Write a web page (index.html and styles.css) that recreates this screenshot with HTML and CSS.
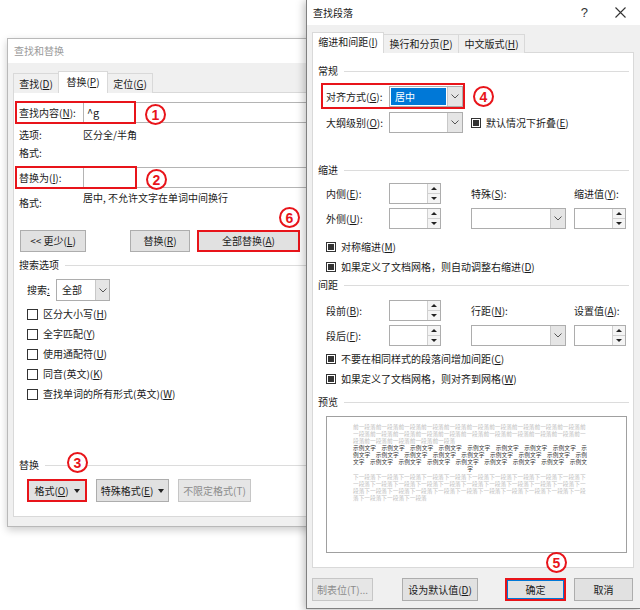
FILE: index.html
```html
<!DOCTYPE html>
<html lang="zh-CN">
<head>
    <meta charset="UTF-8">
    <meta name="viewport" content="width=device-width, initial-scale=1.0">
    <title>查找和替换</title>
    <link rel="stylesheet" href="styles.css">
</head>
<body>
<div class="desk">

    <!-- 查找和替换 -->
    <div class="dlg dlg-find">
        <div class="titlebar inactive"><span class="title">查找和替换</span></div>
        <div class="dlg-body">
            <div class="tabs">
                <div class="tab w45">查找(<u>D</u>)</div>
                <div class="tab active w50">替换(<u>P</u>)</div>
                <div class="tab w45">定位(<u>G</u>)</div>
            </div>
            <div class="panel find-panel">
                <div class="field-row first">
                    <span class="lbl">查找内容(<u>N</u>):</span>
                    <div class="textbox">^g</div>
                </div>
                <div class="info-row opt"><span class="lbl">选项:</span><span>区分全/半角</span></div>
                <div class="info-row"><span class="lbl">格式:</span></div>
                <div class="field-row second">
                    <span class="lbl">替换为(<u>I</u>):</span>
                    <div class="textbox"></div>
                </div>
                <div class="info-row fmt">
                    <span class="lbl">格式:</span>
                    <span class="fmt-val">居中, 不允许文字在单词中间换行</span>
                </div>
                <div class="btn-row act-row">
                    <div class="btn btn-less">&lt;&lt; 更少(<u>L</u>)</div>
                    <div class="btn btn-rep">替换(<u>R</u>)</div>
                    <div class="btn btn-all marked">全部替换(<u>A</u>)</div>
                </div>
                <div class="group-title">搜索选项</div>
                <div class="search-row">
                    <span class="search-lbl">搜索<u>:</u></span>
                    <div class="combo search-combo">
                        <span class="combo-val">全部</span>
                        <span class="combo-drop"><svg width="8" height="5" viewBox="0 0 8 5"><polyline points="0.5,0.5 4,4 7.5,0.5" fill="none" stroke="#555"/></svg></span>
                    </div>
                </div>
                <div class="checks">
                    <div class="chk"><i class="box"></i>区分大小写(<u>H</u>)</div>
                    <div class="chk"><i class="box"></i>全字匹配(<u>Y</u>)</div>
                    <div class="chk"><i class="box"></i>使用通配符(<u>U</u>)</div>
                    <div class="chk"><i class="box"></i>同音(英文)(<u>K</u>)</div>
                    <div class="chk"><i class="box"></i>查找单词的所有形式(英文)(<u>W</u>)</div>
                </div>
                <div class="group-title rep-title">替换</div>
                <div class="btn-row fmt-row">
                    <div class="btn btn-fmt marked">格式(<u>O</u>)<i class="caret"></i></div>
                    <div class="btn btn-special">特殊格式(<u>E</u>)<i class="caret"></i></div>
                    <div class="btn btn-nofmt disabled">不限定格式(T)</div>
                </div>
            </div>
        </div>
    </div>

    <!-- 查找段落 -->
    <div class="dlg dlg-para">
        <div class="titlebar">
            <span class="title">查找段落</span>
            <span class="title-tools">
                <span class="help">?</span>
                <svg class="close" width="11" height="11" viewBox="0 0 11 11"><path d="M0.5 0.5 L10.5 10.5 M10.5 0.5 L0.5 10.5" stroke="#333" stroke-width="1.1"/></svg>
            </span>
        </div>
        <div class="dlg-body">
            <div class="tabs">
                <div class="tab active w71">缩进和间距(<u>I</u>)</div>
                <div class="tab w75">换行和分页(<u>P</u>)</div>
                <div class="tab w66">中文版式(<u>H</u>)</div>
            </div>
            <div class="panel para-panel">
                <div class="group-title">常规</div>
                <div class="p-row align-row">
                    <span class="p-lbl">对齐方式(<u>G</u>):</span>
                    <div class="combo p-combo">
                        <span class="combo-val selected">居中</span>
                        <span class="combo-drop"><svg width="8" height="5" viewBox="0 0 8 5"><polyline points="0.5,0.5 4,4 7.5,0.5" fill="none" stroke="#555"/></svg></span>
                    </div>
                </div>
                <div class="p-row outline-row">
                    <span class="p-lbl">大纲级别(<u>O</u>):</span>
                    <div class="combo p-combo">
                        <span class="combo-val"></span>
                        <span class="combo-drop"><svg width="8" height="5" viewBox="0 0 8 5"><polyline points="0.5,0.5 4,4 7.5,0.5" fill="none" stroke="#555"/></svg></span>
                    </div>
                    <div class="chk collapse-chk"><i class="box mixed"></i>默认情况下折叠(<u>E</u>)</div>
                </div>

                <div class="group-title sec-title">缩进</div>
                <div class="p-grid">
                    <span class="p-lbl">内侧(<u>E</u>):</span>
                    <div class="spin"><span class="spin-btns"><i class="up"></i><i class="down"></i></span></div>
                    <span class="p-lbl">特殊(<u>S</u>):</span>
                    <span class="p-lbl">缩进值(<u>Y</u>):</span>

                    <span class="p-lbl">外侧(<u>U</u>):</span>
                    <div class="spin"><span class="spin-btns"><i class="up"></i><i class="down"></i></span></div>
                    <div class="combo g-combo">
                        <span class="combo-val"></span>
                        <span class="combo-drop"><svg width="8" height="5" viewBox="0 0 8 5"><polyline points="0.5,0.5 4,4 7.5,0.5" fill="none" stroke="#555"/></svg></span>
                    </div>
                    <div class="spin"><span class="spin-btns"><i class="up"></i><i class="down"></i></span></div>
                </div>
                <div class="p-checks first-checks">
                    <div class="chk"><i class="box mixed"></i>对称缩进(<u>M</u>)</div>
                    <div class="chk"><i class="box mixed"></i>如果定义了文档网格，则自动调整右缩进(<u>D</u>)</div>
                </div>

                <div class="group-title">间距</div>
                <div class="p-grid spacing-grid">
                    <span class="p-lbl">段前(<u>B</u>):</span>
                    <div class="spin"><span class="spin-btns"><i class="up"></i><i class="down"></i></span></div>
                    <span class="p-lbl">行距(<u>N</u>):</span>
                    <span class="p-lbl">设置值(<u>A</u>):</span>

                    <span class="p-lbl">段后(<u>F</u>):</span>
                    <div class="spin"><span class="spin-btns"><i class="up"></i><i class="down"></i></span></div>
                    <div class="combo g-combo">
                        <span class="combo-val"></span>
                        <span class="combo-drop"><svg width="8" height="5" viewBox="0 0 8 5"><polyline points="0.5,0.5 4,4 7.5,0.5" fill="none" stroke="#555"/></svg></span>
                    </div>
                    <div class="spin"><span class="spin-btns"><i class="up"></i><i class="down"></i></span></div>
                </div>
                <div class="p-checks second-checks">
                    <div class="chk"><i class="box mixed"></i>不要在相同样式的段落间增加间距(<u>C</u>)</div>
                    <div class="chk"><i class="box mixed"></i>如果定义了文档网格，则对齐到网格(<u>W</u>)</div>
                </div>

                <div class="group-title preview-title">预览</div>
                <div class="preview">
                    <div class="pv-text">
                        <p class="pv-gray">前一段落前一段落前一段落前一段落前一段落前一段落前一段落前一段落前一段落前一段落前一段落前一段落前一段落前一段落前一段落前一段落前一段落前一段落前一段落前一段落前一段落前一段落前一段落前一段落前一段落</p>
                        <p class="pv-sample">示例文字 示例文字 示例文字 示例文字 示例文字 示例文字 示例文字 示例文字 示例文字 示例文字 示例文字 示例文字 示例文字 示例文字 示例文字 示例文字 示例文字 示例文字 示例文字 示例文字 示例文字 示例文字 示例文字 示例文字 示例文字</p>
                        <p class="pv-gray">下一段落下一段落下一段落下一段落下一段落下一段落下一段落下一段落下一段落下一段落下一段落下一段落下一段落下一段落下一段落下一段落下一段落下一段落下一段落下一段落下一段落下一段落下一段落下一段落下一段落下一段落下一段落下一段落下一段落下一段落下一段落下一段落下一段落下一段落</p>
                    </div>
                </div>
            </div>
            <div class="para-buttons">
                <div class="btn btn-tabs disabled">制表位(T)...</div>
                <div class="btn btn-default">设为默认值(<u>D</u>)</div>
                <div class="btn btn-ok marked">确定</div>
                <div class="btn btn-cancel">取消</div>
            </div>
        </div>
    </div>

    <!-- 标注 -->
    <div class="mark-box mark-find"></div>
    <div class="mark-box mark-replace"></div>
    <div class="mark-box mark-align"></div>
    <div class="num num-1">1</div>
    <div class="num num-2">2</div>
    <div class="num num-3">3</div>
    <div class="num num-4">4</div>
    <div class="num num-5">5</div>
    <div class="num num-6">6</div>
</div>
</body>
</html>
```

FILE: styles.css
```css
/* 对话框截图 */
body {
    margin: 0;
    background-color: #fff;
    font-family: "Noto Sans CJK SC", "Noto Sans", sans-serif;
    font-size: 10px;
    line-height: 16px;
    color: #1a1a1a;
}

u {
    text-decoration: underline;
    text-underline-offset: 1px;
}

.desk {
    position: relative;
    width: 640px;
    height: 610px;
    overflow: hidden;
}

/* 窗口 */
.dlg {
    position: absolute;
    display: flex;
    flex-direction: column;
    box-sizing: border-box;
    background-color: #f0f0f0;
    border: 1px solid #b9b9b9;
    white-space: nowrap;
}

.dlg-find {
    left: 7px;
    top: 38px;
    width: 330px;
    height: 489px;
    box-shadow: 0 3px 8px rgba(0, 0, 0, 0.2);
}

.dlg-para {
    left: 306px;
    top: -1px;
    width: 336px;
    height: 610px;
    border-color: #808080;
    box-shadow: -2px 2px 8px rgba(0, 0, 0, 0.25);
    z-index: 2;
}

.titlebar {
    display: flex;
    align-items: center;
    height: 24px;
    padding: 0 15px 0 6px;
    background-color: #fff;
    flex-shrink: 0;
}

.dlg-para .titlebar {
    height: 25px;
}

.titlebar.inactive .title {
    color: #9a9a9a;
}

.title-tools {
    margin-left: auto;
    display: flex;
    align-items: center;
}

.help {
    margin-right: 27px;
    font-size: 13px;
    font-family: "Liberation Sans", sans-serif;
    color: #333;
}

.dlg-body {
    display: flex;
    flex-direction: column;
    padding-top: 8px;
}

.dlg-para .dlg-body {
    padding-top: 7px;
}

/* 选项卡 */
.tabs {
    display: flex;
    align-items: flex-end;
    height: 22px;
    margin: 0 0 -1px 5px;
    position: relative;
    z-index: 1;
}

.dlg-para .tabs {
    height: 21px;
}

.tab {
    display: flex;
    align-items: center;
    justify-content: center;
    box-sizing: border-box;
    height: 20px;
    border: 1px solid #d9d9d9;
    border-bottom: none;
    background-color: #f0f0f0;
}

.tab + .tab {
    margin-left: -1px;
}

.tab.active {
    height: 22px;
    background-color: #fff;
    padding-bottom: 2px;
}

.dlg-para .tab {
    height: 19px;
}

.dlg-para .tab.active {
    height: 21px;
}

.w45 { width: 46px; }
.w50 { width: 50px; }
.w71 { width: 72px; }
.w75 { width: 76px; }
.w66 { width: 67px; }

.panel {
    background-color: #fff;
    border: 1px solid #d9d9d9;
}

/* 查找和替换 面板 */
.find-panel {
    margin-left: 5px;
    padding: 0 0 14px 5px;
}

.field-row {
    display: flex;
    align-items: center;
    height: 21px;
}

.field-row.first {
    margin-top: 9px;
}

.field-row.second {
    margin-top: 6px;
}

.lbl {
    width: 64px;
    flex-shrink: 0;
}

.textbox {
    box-sizing: border-box;
    width: 240px;
    height: 21px;
    border: 1px solid #b4b4b4;
    padding-left: 3px;
    line-height: 19px;
    font-size: 11px;
}

.info-row {
    display: flex;
    height: 17px;
    line-height: 17px;
}

.info-row.opt {
    margin-top: 3px;
    height: 18px;
    line-height: 18px;
}

.info-row.fmt {
    height: 23px;
    align-items: flex-start;
    line-height: 16px;
}

.info-row.fmt .lbl {
    margin-top: 7px;
}

.fmt-val {
    margin-top: 2px;
}

.btn-row {
    display: flex;
}

.btn {
    display: flex;
    align-items: center;
    justify-content: center;
    box-sizing: border-box;
    height: 22px;
    background-color: #e1e1e1;
    border: 1px solid #adadad;
    flex-shrink: 0;
}

.btn.disabled {
    color: #8c8c8c;
    background-color: #e6e6e6;
    border-color: #c6c6c6;
}

.btn.marked {
    border: 2px solid #e8141a;
}

.act-row {
    margin: 19px 0 0 1px;
}

.btn-less { width: 66px; }
.btn-rep { width: 60px; margin-left: 44px; }
.btn-all { width: 103px; margin-left: 7px; }

.group-title {
    display: flex;
    align-items: center;
    height: 16px;
    margin-top: 5px;
}

.group-title::after {
    content: "";
    flex: 1;
    height: 1px;
    margin-left: 6px;
    background-color: #dcdcdc;
}

.search-row {
    display: flex;
    align-items: center;
    height: 22px;
    margin: 6px 0 0 8px;
}

.search-lbl {
    width: 29px;
}

.combo {
    display: flex;
    box-sizing: border-box;
    border: 1px solid #adadad;
    background-color: #fff;
}

.combo-val {
    flex: 1;
    padding-left: 5px;
    display: flex;
    align-items: center;
}

.combo-drop {
    width: 13px;
    display: flex;
    align-items: center;
    justify-content: center;
    background-color: #e5e5e5;
    border-left: 1px solid #c8c8c8;
}

.search-combo {
    width: 54px;
    height: 22px;
}

.checks {
    margin: 3px 0 0 8px;
}

.chk {
    display: flex;
    align-items: center;
    height: 20px;
}

.box {
    position: relative;
    box-sizing: border-box;
    width: 11px;
    height: 11px;
    margin-right: 5px;
    border: 1px solid #333;
    background-color: #fff;
    flex-shrink: 0;
}

.box.mixed {
    width: 10px;
    height: 10px;
}

.box.mixed::after {
    content: "";
    position: absolute;
    left: 1px;
    top: 1px;
    width: 6px;
    height: 6px;
    background-color: #333;
}

.rep-title {
    margin-top: 53px;
}

.fmt-row {
    margin: 6px 0 0 8px;
}

.fmt-row .btn {
    height: 23px;
}

.btn-fmt { width: 60px; }
.btn-special { width: 73px; margin-left: 9px; }
.btn-nofmt { width: 73px; margin-left: 9px; }

.caret {
    width: 0;
    height: 0;
    margin-left: 5px;
    border-left: 3.5px solid transparent;
    border-right: 3.5px solid transparent;
    border-top: 4px solid #222;
}

/* 查找段落 面板 */
.para-panel {
    margin: 0 7px 0 5px;
    padding: 0 4px 14px 5px;
}

.para-panel > .group-title:first-child {
    margin-top: 10px;
}

.p-row {
    display: flex;
    align-items: center;
    height: 21px;
    margin-left: 8px;
}

.align-row {
    margin-top: 7px;
}

.outline-row {
    margin-top: 5px;
}

.p-lbl {
    width: 63px;
    flex-shrink: 0;
}

.p-combo {
    width: 74px;
    height: 21px;
}

.p-combo .combo-drop {
    width: 14px;
}

.combo-val.selected {
    margin: 1px;
    padding-left: 4px;
    background-color: #0078d7;
    color: #fff;
}

.collapse-chk {
    margin-left: 8px;
}

.sec-title {
    margin-top: 29px;
}

.p-grid {
    display: grid;
    grid-template-columns: 63px 82px 103px 52px;
    grid-template-rows: 21px 21px;
    row-gap: 4px;
    align-items: center;
    margin: 5px 0 0 8px;
}

.spacing-grid {
    margin-top: 7px;
}

.spin {
    display: flex;
    justify-content: flex-end;
    box-sizing: border-box;
    width: 52px;
    height: 21px;
    border: 1px solid #adadad;
    background-color: #fff;
}

.spin-btns {
    display: flex;
    flex-direction: column;
    width: 12px;
    border-left: 1px solid #d0d0d0;
}

.spin-btns i {
    flex: 1;
    display: flex;
    align-items: center;
    justify-content: center;
    background-color: #f4f4f4;
}

.spin-btns i + i {
    border-top: 1px solid #d0d0d0;
}

.spin-btns i::before {
    content: "";
    width: 0;
    height: 0;
    border-left: 3px solid transparent;
    border-right: 3px solid transparent;
}

.spin-btns .up::before {
    border-bottom: 3px solid #222;
}

.spin-btns .down::before {
    border-top: 3px solid #222;
}

.g-combo {
    width: 95px;
    height: 21px;
}

.g-combo .combo-drop {
    width: 14px;
}

.p-checks {
    margin-left: 8px;
}

.first-checks {
    margin-top: 8px;
}

.second-checks {
    margin-top: 3px;
}

.first-checks + .group-title {
    margin-top: 0;
}

.preview {
    box-sizing: border-box;
    width: 301px;
    height: 137px;
    margin: 6px 0 0 8px;
    padding-top: 6px;
    border: 1px solid #a0a0a0;
    white-space: normal;
}

.pv-text {
    width: 234px;
    margin-left: 26px;
    font-size: 5.68px;
    line-height: 7px;
}

.pv-text p {
    margin: 0;
}

.pv-gray {
    color: #c0c0c0;
}

.pv-sample {
    color: #333;
    text-align: justify;
    text-align-last: center;
    word-spacing: 4px;
    margin: 0 0 1px 0 !important;
}

.para-buttons {
    display: flex;
    margin: 10px 7px 0 5px;
}

.para-buttons .btn {
    height: 23px;
}

.btn-tabs { width: 61px; }
.btn-default { width: 76px; margin-left: 29px; }
.btn-ok { width: 61px; margin-left: 27px; box-shadow: inset 0 0 0 1px #0078d7; }
.btn-cancel { width: 59px; margin-left: 8px; }

/* 标注 */
.mark-box {
    position: absolute;
    box-sizing: border-box;
    border: 2px solid #e8141a;
    z-index: 3;
}

.mark-find { left: 15px; top: 101px; width: 121px; height: 23px; }
.mark-replace { left: 15px; top: 166px; width: 122px; height: 23px; }
.mark-align { left: 321px; top: 83px; width: 144px; height: 26px; }

.num {
    position: absolute;
    box-sizing: border-box;
    width: 21px;
    height: 21px;
    border: 2px solid #e8141a;
    border-radius: 50%;
    display: flex;
    align-items: center;
    justify-content: center;
    color: #e8141a;
    font-family: "Liberation Sans", sans-serif;
    font-weight: bold;
    font-size: 14px;
    line-height: 1;
    background-color: #fff;
    z-index: 3;
}

.num-1 { left: 145px; top: 104px; }
.num-2 { left: 146px; top: 169px; }
.num-3 { left: 67px; top: 452px; }
.num-4 { left: 473px; top: 86px; }
.num-5 { left: 546px; top: 552px; }
.num-6 { left: 279px; top: 207px; }
```
